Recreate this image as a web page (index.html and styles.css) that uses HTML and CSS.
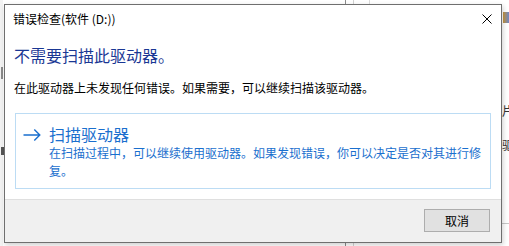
FILE: index.html
```html
<!DOCTYPE html>
<html lang="zh-CN">
<head>
<meta charset="utf-8">
<title>错误检查</title>
<link rel="stylesheet" href="styles.css">
</head>
<body>
<div class="desk">
  <div class="bg bg-left"></div>
  <div class="bg bg-mark1"></div>
  <div class="bg bg-mark2"></div>
  <div class="bg bg-vl1"></div>
  <div class="bg bg-vl2"></div>
  <div class="bg bg-vl3"></div>
  <div class="bg bg-hl"></div>
  <div class="bg bg-icon"></div>
  <div class="bg bg-txt1">片</div>
  <div class="bg bg-txt2">驱</div>
  <div class="window">
    <div class="titlebar">
      <span class="title">错误检查(软件 (D:))</span>
      <span class="close">
        <svg width="10" height="10" viewBox="0 0 10 10"><path d="M0.5 0.5 L9.5 9.5 M9.5 0.5 L0.5 9.5" stroke="#000" stroke-width="1" fill="none"/></svg>
      </span>
    </div>
    <div class="content">
      <div class="heading">不需要扫描此驱动器。</div>
      <div class="text">在此驱动器上未发现任何错误。如果需要，可以继续扫描该驱动器。</div>
      <div class="cmdlink">
        <span class="arrow">
          <svg width="18" height="12" viewBox="0 0 18 12"><path d="M0.5 6 H16.8 M11.3 0.6 L16.8 6 L11.3 11.4" stroke="#1a6fce" stroke-width="1.4" fill="none"/></svg>
        </span>
        <div class="cmdtext">
          <div class="cmdtitle">扫描驱动器</div>
          <div class="cmddesc">在扫描过程中，可以继续使用驱动器。如果发现错误，你可以决定是否对其进行修复。</div>
        </div>
      </div>
    </div>
    <div class="footer">
      <button class="btn">取消</button>
    </div>
  </div>
</div>
</body>
</html>
```
FILE: styles.css
```css
html, body {
  margin: 0;
  padding: 0;
  background: #ffffff;
}
body {
  font-family: "Noto Sans CJK SC", "Noto Sans", sans-serif;
  width: 509px;
  height: 246px;
  overflow: hidden;
}
.desk {
  position: relative;
  width: 509px;
  height: 246px;
  padding: 4px 0 0 4px;
  box-sizing: border-box;
}
.bg {
  position: absolute;
}
.bg-left {
  left: 0;
  top: 0;
  width: 3px;
  height: 246px;
  background: #f3f3f3;
}
.bg-mark1 {
  left: 1px;
  top: 67px;
  width: 2px;
  height: 12px;
  background: #8a8a8a;
}
.bg-mark2 {
  left: 1px;
  top: 147px;
  width: 3px;
  height: 8px;
  background: #555;
}
.bg-vl1 {
  left: 345px;
  top: 0;
  width: 1px;
  height: 246px;
  background: #8c8c8c;
}
.bg-vl2 {
  left: 353px;
  top: 0;
  width: 1px;
  height: 246px;
  background: #d2d2d2;
}
.bg-vl3 {
  left: 369px;
  top: 0;
  width: 1px;
  height: 6px;
  background: #dcdcdc;
}
.bg-hl {
  left: 500px;
  top: 223px;
  width: 9px;
  height: 1px;
  background: #c8c8c8;
}
.bg-icon {
  left: 503px;
  top: 12px;
  width: 6px;
  height: 11px;
  background: linear-gradient(90deg, #c9963a, #6c88c8);
}
.bg-txt1, .bg-txt2 {
  font-size: 12px;
  line-height: 16px;
  color: #333;
  left: 502px;
}
.bg-txt1 { top: 103px; }
.bg-txt2 { top: 137px; }
.window {
  position: relative;
  width: 498px;
  height: 239px;
  box-sizing: border-box;
  border: 1px solid #6f6f6f;
  background: #ffffff;
  display: flex;
  flex-direction: column;
  box-shadow: 1px 2px 5px rgba(0,0,0,0.2);
}
.titlebar {
  height: 30px;
  display: flex;
  align-items: center;
  justify-content: space-between;
  padding: 0 9px 2px 8px;
  box-sizing: border-box;
  flex: none;
}
.title {
  font-size: 12px;
  line-height: 16px;
  color: #000;
}
.close {
  display: flex;
  width: 10px;
  height: 10px;
}
.content {
  flex: 1;
  padding: 0 10px;
}
.heading {
  font-size: 16px;
  line-height: 20px;
  color: #1a3794;
  margin: 10px 0 0 -1px;
}
.text {
  font-size: 12px;
  line-height: 16px;
  color: #000;
  margin: 15px 0 0 -1px;
}
.cmdlink {
  margin-top: 17px;
  height: 76px;
  box-sizing: border-box;
  border: 1px solid #bcdcf4;
  display: flex;
  align-items: flex-start;
  padding: 10px 8px 0 7px;
}
.arrow {
  display: flex;
  width: 18px;
  margin: 5px 0 0 0;
  flex: none;
}
.cmdtext {
  margin-left: 8px;
  color: #1a6fce;
}
.cmdtitle {
  font-size: 16px;
  line-height: 20px;
}
.cmddesc {
  font-size: 12px;
  line-height: 18px;
}
.footer {
  flex: none;
  height: 43px;
  border-top: 1px solid #dfdfdf;
  background: #f0f0f0;
  display: flex;
  justify-content: flex-end;
  align-items: flex-start;
  padding: 9px 11px 0 0;
  box-sizing: border-box;
}
.btn {
  width: 66px;
  height: 23px;
  border: 1px solid #adadad;
  background: #e1e1e1;
  font-family: "Noto Sans CJK SC", sans-serif;
  font-size: 12px;
  line-height: 16px;
  color: #000;
  padding: 0;
}
```
